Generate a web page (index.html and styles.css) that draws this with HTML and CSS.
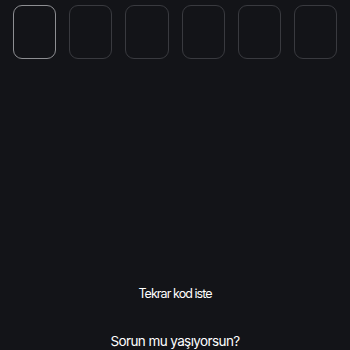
FILE: index.html
```html
<!DOCTYPE html>
<html lang="tr">
<head>
<meta charset="utf-8">
<link rel="stylesheet" href="styles.css">
</head>
<body>
<main class="screen">
  <div class="otp">
    <div class="cell cell-active"></div>
    <div class="cell"></div>
    <div class="cell"></div>
    <div class="cell"></div>
    <div class="cell"></div>
    <div class="cell"></div>
  </div>
  <button class="link resend" type="button">Tekrar kod iste</button>
  <button class="link help" type="button">Sorun mu yaşıyorsun?</button>
</main>
</body>
</html>
```

FILE: styles.css
```css
html, body {
  margin: 0;
  padding: 0;
  background: #131418;
  height: 100%;
  overflow: hidden;
}

.screen {
  display: flex;
  flex-direction: column;
  align-items: center;
  font-family: Inter, "Noto Sans", sans-serif;
  color: #ffffff;
}

.otp {
  display: flex;
  gap: 13px;
  padding: 5px 13px 0;
  width: 100%;
  box-sizing: border-box;
}

.cell {
  flex: 1;
  height: 54px;
  box-sizing: border-box;
  border: 1.5px solid #393a3f;
  border-radius: 9px;
}

.cell-active {
  border-color: #8d8e92;
}

.link {
  background: none;
  border: 0;
  padding: 0;
  color: #ffffff;
  font-family: inherit;
  font-size: 13px;
  line-height: 16px;
  font-weight: 400;
}

.resend {
  margin-top: 227px;
  font-size: 12.5px;
  letter-spacing: -0.95px;
}

.help {
  margin-top: 31px;
  font-size: 13.5px;
  letter-spacing: -0.6px;
}
```
